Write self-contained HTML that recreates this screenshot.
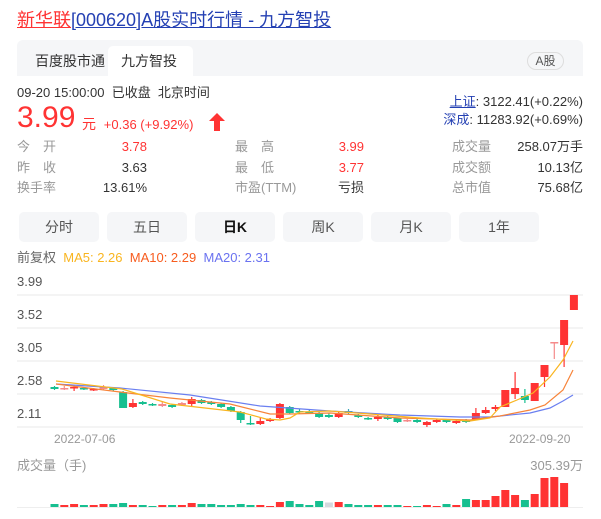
<!DOCTYPE html>
<html><head><meta charset="utf-8"><style>
*{margin:0;padding:0;box-sizing:border-box}
body{width:601px;height:519px;background:#fff;font-family:"Liberation Sans","Noto Sans CJK SC",sans-serif;position:relative;overflow:hidden;color:#333}
.a{position:absolute;white-space:nowrap}
.g{color:#999}.r{color:#f33}
.btn{position:absolute;top:212px;width:80px;height:30px;background:#f5f6f8;border-radius:5px;text-align:center;line-height:30px;font-size:14px;color:#555}
</style></head><body>
<div class="a" style="left:17px;top:8px;font-size:18px;line-height:24px;"><span style="color:#f33;text-decoration:underline">新华联</span><span style="color:#2440b3;text-decoration:underline">[000620]A股实时行情 - 九方智投</span></div>
<div class="a" style="left:17px;top:40px;width:566px;height:36px;background:#f5f6f8;border-radius:6px 6px 0 0"></div>
<div class="a" style="left:108px;top:46px;width:85px;height:30px;background:#fff;border-radius:5px 5px 0 0"></div>
<div class="a" style="left:35px;top:51px;font-size:14px;line-height:20px">百度股市通</div>
<div class="a" style="left:121px;top:51px;font-size:14px;line-height:20px">九方智投</div>
<div class="a" style="left:527px;top:52px;width:37px;height:18px;border:1px solid #ddd;border-radius:9px;font-size:12px;line-height:16px;text-align:center;color:#555">A股</div>
<div class="a" style="left:17px;top:84px;font-size:13px;line-height:18px">09-20 15:00:00 &nbsp;已收盘 &nbsp;北京时间</div>
<div class="a r" style="left:17px;top:102px;font-size:30px;line-height:32px">3.99</div>
<div class="a r" style="left:82px;top:115px;font-size:14px;line-height:18px">元 &nbsp;<span style="font-size:13px">+0.36 (+9.92%)</span></div>
<svg class="a" style="left:209px;top:113px" width="16" height="18"><path d="M8 0 L16 8 L11 8 L11 18 L5 18 L5 8 L0 8 Z" fill="#f33"/></svg>
<div class="a" style="right:18px;top:93px;font-size:13px;line-height:18px;text-align:right"><span style="color:#2440b3;text-decoration:underline">上证</span>: 3122.41(+0.22%)<br><span style="color:#2440b3">深成</span>: 11283.92(+0.69%)</div>
<div class="a" style="left:17px;top:137px;width:566px;font-size:13px;line-height:20.5px">
<div class="a g" style="left:0">今　开<br>昨　收<br>换手率</div>
<div class="a" style="left:0;width:130px;text-align:right"><span class="r">3.78</span><br>3.63<br>13.61%</div>
<div class="a g" style="left:218px">最　高<br>最　低<br>市盈(TTM)</div>
<div class="a" style="left:0;width:347px;text-align:right"><span class="r">3.99</span><br><span class="r">3.77</span><br>亏损</div>
<div class="a g" style="left:435px">成交量<br>成交额<br>总市值</div>
<div class="a" style="right:0;text-align:right">258.07万手<br>10.13亿<br>75.68亿</div>
</div>
<div class="btn" style="left:19px">分时</div><div class="btn" style="left:107px">五日</div><div class="btn" style="left:195px;color:#111;font-weight:bold">日K</div><div class="btn" style="left:283px">周K</div><div class="btn" style="left:371px">月K</div><div class="btn" style="left:459px">1年</div>
<div class="a" style="left:17px;top:249px;font-size:13px;line-height:18px"><span style="color:#666">前复权</span>&nbsp;&nbsp;<span style="color:#f9b520">MA5: 2.26</span>&nbsp;&nbsp;<span style="color:#f75c1e">MA10: 2.29</span>&nbsp;&nbsp;<span style="color:#6a72f0">MA20: 2.31</span></div>
<div class="a" style="left:17px;top:274px;font-size:13px;line-height:16px;color:#555">3.99</div>
<div class="a" style="left:17px;top:307px;font-size:13px;line-height:16px;color:#555">3.52</div>
<div class="a" style="left:17px;top:340px;font-size:13px;line-height:16px;color:#555">3.05</div>
<div class="a" style="left:17px;top:373px;font-size:13px;line-height:16px;color:#555">2.58</div>
<div class="a" style="left:17px;top:406px;font-size:13px;line-height:16px;color:#555">2.11</div>
<div class="a g" style="left:54px;top:431px;font-size:12px;line-height:16px">2022-07-06</div>
<div class="a g" style="left:509px;top:431px;font-size:12px;line-height:16px">2022-09-20</div>
<div class="a g" style="left:17px;top:457px;font-size:13px;line-height:18px">成交量（手)</div>
<div class="a g" style="right:18px;top:457px;font-size:13px;line-height:18px">305.39万</div>
<svg id="ch" class="a" style="left:0;top:0" width="601" height="519"></svg>
<script>
var s='';
[295,328,361,394,427].forEach(function(y){s+='<rect x="17" y="'+(y-1)+'" width="566" height="2" fill="#f4f4f4"/>';});
s+='<rect x="17" y="507" width="566" height="1" fill="#eee"/>';
var G='#17bf90',R='#f33',P='#f58a8a';
var c=[[387,389,386,390,G],[388,389,386,390,P],[387,388,385,391,R],[388,389,387,390,G],[389,390,388,391,R],[387,389,385,390,P],[388,390,387,391,G],[392,408,391,408,G],[403,407,399,408,R],[402,404,401,405,G],[404,405,403,406,G],[404,406,401,407,P],[405,407,404,408,G],[403,405,402,406,P],[399,404,397,406,R],[400,403,399,404,G],[402,404,401,405,G],[404,407,403,408,G],[407,411,406,412,G],[412,420,411,423,G],[423,424,416,425,G],[421,424,418,425,R],[419,421,418,422,R],[404,418,403,419,R],[407,413,406,414,G],[411,412,409,414,G],[412,413,410,414,G],[413,417,412,418,G],[415,417,413,418,G],[413,417,412,418,R],[411,413,409,414,'#3aa6b9'],[415,417,414,418,G],[418,419,417,420,G],[417,419,415,421,R],[417,419,416,420,G],[418,422,418,423,G],[420,421,419,422,P],[420,422,419,423,G],[422,425,421,427,R],[420,422,419,423,R],[420,422,419,423,G],[421,423,419,424,R],[420,422,419,423,G],[413,419,408,420,R],[410,413,407,414,R],[407,409,405,411,R],[390,407,390,407,R],[388,394,372,399,R],[396,400,389,403,G],[383,401,383,401,R],[365,377,365,387,R],[342,343,342,359,P],[320,345,320,367,R],[295,310,295,310,R]];
var v=[3,2,3,2,2,3,3,4,2,2,1,2,2,2,4,3,3,2,2,3,2,2,1,5,6,3,2,6,4.5,5,3,2,2,2,2,2,1,1,2,1,3,2,8,7,7,11,17,12,7,13,29,30,24];
c.forEach(function(d,i){var x=54.5+i*9.8;
s+='<rect x="'+(x-0.6)+'" y="'+d[2]+'" width="1.2" height="'+(d[3]-d[2])+'" fill="'+d[4]+'"/>';
s+='<rect x="'+(x-4)+'" y="'+d[0]+'" width="8" height="'+Math.max(1.5,d[1]-d[0])+'" fill="'+d[4]+'"/>';
if(i<v.length){var h=v[i];var col=(d[4]==G||d[4]=='#3aa6b9')?G:R; if(i==28)col='#d5d8de';
s+='<rect x="'+(x-4)+'" y="'+(507-h)+'" width="8" height="'+h+'" fill="'+col+'"/>';}});
function pl(p,col){s+='<polyline points="'+p+'" fill="none" stroke="'+col+'" stroke-width="1.2"/>';}
pl('56,384 120,388 190,395 260,406 330,411 400,415 460,417 490,417 530,413 550,408 563,401 573,395','#6a7ff0');
pl('56,384 120,392 170,398 230,404 270,414 290,414 330,413 400,418 470,420 500,416 530,410 545,405 563,390 573,370','#f7843a');
pl('56,381 122,389 170,404 240,412 266,419 280,420 290,418 300,412 330,411 370,414 420,418 470,421 490,418 500,407 517,400 533,393 550,377 563,360 573,341','#f9b520');
document.getElementById('ch').innerHTML=s;
</script>
</body></html>
